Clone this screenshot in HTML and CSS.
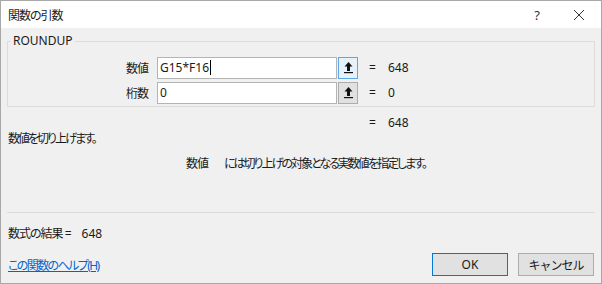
FILE: index.html
```html
<!DOCTYPE html>
<html lang="ja">
<head>
    <meta charset="UTF-8">
    <title>関数の引数</title>
    <link rel="stylesheet" href="styles.css">
</head>
<body>
    <div class="dialog">
        <div class="titlebar">
            <span class="title">関数の引数</span>
            <span class="title-btn help">?</span>
            <span class="title-btn close">
                <svg width="12" height="12" viewBox="0 0 12 12"><path d="M1 1 L11 11 M11 1 L1 11" stroke="#333" stroke-width="1" fill="none"/></svg>
            </span>
        </div>

        <div class="body">
            <fieldset class="args">
                <legend>ROUNDUP</legend>
                <div class="arg-row">
                    <label>数値</label>
                    <div class="arg-input">G15*F16<span class="caret"></span></div>
                    <button class="ref-btn active">
                        <svg width="11" height="13" viewBox="0 0 11 13"><path d="M5.5 1 L1.5 5.5 H4 V10 H7 V5.5 H9.5 Z" fill="#111"/><rect x="1" y="11" width="9" height="1.2" fill="#111"/></svg>
                    </button>
                    <span class="eq">=</span>
                    <span class="val">648</span>
                </div>
                <div class="arg-row">
                    <label>桁数</label>
                    <div class="arg-input">0</div>
                    <button class="ref-btn">
                        <svg width="11" height="13" viewBox="0 0 11 13"><path d="M5.5 1 L1.5 5.5 H4 V10 H7 V5.5 H9.5 Z" fill="#111"/><rect x="1" y="11" width="9" height="1.2" fill="#111"/></svg>
                    </button>
                    <span class="eq">=</span>
                    <span class="val">0</span>
                </div>
            </fieldset>

            <div class="arg-row total">
                <span></span><span></span><span></span>
                <span class="eq">=</span>
                <span class="val">648</span>
            </div>

            <p class="func-desc">数値を切り上げます。</p>
            <p class="arg-desc"><span class="arg-name">数値</span>には切り上げの対象となる実数値を指定します。</p>

            <hr class="sep">

            <p class="result">数式の結果 =<span class="result-val">648</span></p>

            <div class="footer">
                <a class="help-link" href="#">この関数のヘルプ(H)</a>
                <div class="buttons">
                    <button class="btn default">OK</button>
                    <button class="btn">キャンセル</button>
                </div>
            </div>
        </div>
    </div>
</body>
</html>
```

FILE: styles.css
```css
body {
    margin: 0;
    font-family: "Noto Sans", "Noto Sans CJK JP", sans-serif;
    font-size: 12px;
    font-feature-settings: "palt";
    letter-spacing: -1px;
    color: #1a1a1a;
}
.dialog {
    width: 602px;
    height: 284px;
    box-sizing: border-box;
    border: 1px solid #a8a8a8;
    background-color: #f0f0f0;
    overflow: hidden;
}
.titlebar {
    height: 27px;
    background-color: #fff;
    display: flex;
    align-items: center;
}
.title {
    padding-left: 7px;
    flex: 1;
}
.title-btn {
    width: 44px;
    text-align: center;
    font-size: 13px;
    color: #333;
    letter-spacing: 0;
}
.help {
    width: 30px;
    margin-right: 5px;
}
.close svg {
    display: block;
    margin: 0 auto;
}
.body {
    padding: 0 6px;
}
.args {
    margin: 6px 0 0;
    padding: 7px 0 1px;
    border: 1px solid #dcdcdc;
}
.args legend {
    padding: 0 2px;
    margin-left: 3px;
    line-height: 14px;
    letter-spacing: 0;
}
.arg-row {
    display: grid;
    grid-template-columns: 140px 189px 21px 30px 1fr;
    align-items: center;
    height: 25px;
}
.arg-row label {
    grid-column: 1;
    text-align: right;
}
.arg-input {
    margin-left: 9px;
    height: 22px;
    box-sizing: border-box;
    border: 1px solid #b4b4b4;
    background-color: #fff;
    padding: 0 2px;
    line-height: 20px;
    letter-spacing: 0;
    display: flex;
    align-items: center;
}
.caret {
    width: 1px;
    height: 15px;
    background-color: #000;
    margin-left: 1px;
}
.ref-btn {
    width: 20px;
    height: 22px;
    margin-left: 1px;
    padding: 0;
    box-sizing: border-box;
    border: 1px solid #adadad;
    background-color: #e1e1e1;
    display: flex;
    align-items: center;
    justify-content: center;
}
.ref-btn.active {
    border-color: #5ea6e8;
    background-color: #e5f1fb;
}
.eq {
    padding-left: 11px;
    letter-spacing: 0;
}
.val {
    letter-spacing: 0;
}
.total {
    padding-left: 1px;
    margin-top: 6px;
    height: 18px;
}
.func-desc {
    margin: 0;
    padding-left: 1px;
    line-height: 16px;
    letter-spacing: -2px;
}
.arg-desc {
    margin: 9px 0 0;
    padding-left: 179px;
    line-height: 16px;
    letter-spacing: -2px;
}
.arg-name {
    margin-right: 16px;
    letter-spacing: -1px;
}
.sep {
    margin: 40px 0 0;
    border: none;
    border-top: 1px solid #dadada;
}
.result {
    margin: 12px 0 0;
    padding-left: 1px;
    line-height: 18px;
}
.result-val {
    margin-left: 11px;
    letter-spacing: 0;
}
.footer {
    display: flex;
    align-items: center;
    justify-content: space-between;
    margin-top: 10px;
}
.help-link {
    color: #0066cc;
    padding-left: 1px;
    letter-spacing: -1.6px;
}
.buttons {
    display: flex;
    gap: 10px;
    padding-right: 1px;
}
.btn {
    width: 76px;
    height: 23px;
    box-sizing: border-box;
    border: 1px solid #adadad;
    background-color: #e1e1e1;
    font-family: inherit;
    font-size: 12px;
    letter-spacing: -1px;
    color: #1a1a1a;
    padding: 0;
}
.btn.default {
    border: 1px solid #0078d7;
    letter-spacing: 0;
}
```
